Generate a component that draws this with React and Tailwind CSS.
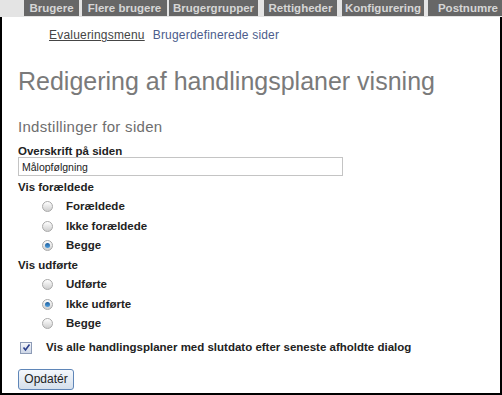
import React from 'react';

const tabs = [
  { label: 'Brugere', cls: 'ml-[24px] w-[55px]' },
  { label: 'Flere brugere', cls: 'ml-[3px] w-[85px]' },
  { label: 'Brugergrupper', cls: 'ml-[2px] w-[89px]' },
  { label: 'Rettigheder', cls: 'ml-[6px] w-[73px]' },
  { label: 'Konfigurering', cls: 'ml-[5px] w-[82px]' },
  { label: 'Postnumre', cls: 'ml-[4px] w-[80px]' },
];

function Radio({ checked }) {
  return (
    <span className="w-[11px] h-[11px] rounded-full border border-[#a9a9a9] bg-gradient-to-b from-[#ffffff] to-[#cfcfcf] flex items-center justify-center">
      {checked && (
        <span className="w-[5px] h-[5px] rounded-full bg-gradient-to-b from-[#1f5e9c] to-[#4fa0e0]" />
      )}
    </span>
  );
}

function RadioRow({ label, checked }) {
  return (
    <div className="h-[19.5px] flex items-center pl-[24px]">
      <Radio checked={checked} />
      <span className="ml-[13px] text-[11.5px] font-bold text-[#222]">{label}</span>
    </div>
  );
}

export default function App() {
  return (
    <div className="w-[502px] h-[395px] flex flex-col bg-white font-['Liberation_Sans',Arial,sans-serif] overflow-hidden">
      {/* top menu */}
      <div className="h-[17px] shrink-0 bg-[#e4e4e4] flex">
        {tabs.map((t) => (
          <div
            key={t.label}
            className={`${t.cls} h-[16px] shrink-0 bg-[#676767] text-[#d6d6d6] text-[11.5px] font-bold leading-[16px] text-center whitespace-nowrap`}
          >
            {t.label}
          </div>
        ))}
      </div>

      <div className="flex-1 border-x-2 border-b-2 border-black pl-[16px] flex flex-col">
        {/* sub menu */}
        <div className="mt-[11px] h-[14px] leading-[14px] text-[12px] tracking-[0.2px] pl-[31px] flex gap-[8px]">
          <span className="text-[#454545] underline">Evalueringsmenu</span>
          <span className="text-[#4b5c8c]">Brugerdefinerede sider</span>
        </div>

        <h1 className="mt-[24px] h-[30px] leading-[30px] text-[25px] text-[#7a7a7a] whitespace-nowrap">
          Redigering af handlingsplaner visning
        </h1>

        <h2 className="mt-[22px] h-[18px] leading-[18px] text-[15px] tracking-[0.3px] text-[#6e6e6e]">
          Indstillinger for siden
        </h2>

        <div className="mt-[8px] h-[14px] leading-[14px] text-[11.5px] font-bold text-[#222]">
          Overskrift på siden
        </div>
        <input
          defaultValue="Målopfølgning"
          className="mt-[-1px] w-[325px] h-[19px] border border-[#c4c4c4] px-[3px] text-[10.5px] text-[#222] outline-none"
        />

        <div className="mt-[1.5px] h-[19.5px] leading-[19.5px] text-[11.5px] font-bold text-[#222]">
          Vis forældede
        </div>
        <RadioRow label="Forældede" />
        <RadioRow label="Ikke forældede" />
        <RadioRow label="Begge" checked />

        <div className="h-[19.5px] leading-[19.5px] text-[11.5px] font-bold text-[#222]">
          Vis udførte
        </div>
        <RadioRow label="Udførte" />
        <RadioRow label="Ikke udførte" checked />
        <RadioRow label="Begge" />

        <div className="mt-[4px] h-[20px] flex items-center pl-[2px]">
          <span className="w-[12px] h-[12px] border border-[#8d9bb6] bg-gradient-to-b from-[#f4f6fa] to-[#cdd6e6] flex items-center justify-center">
            <svg width="9" height="9" viewBox="0 0 9 9">
              <path d="M1.5 4.5 L3.5 7 L7.5 1.5" fill="none" stroke="#2b3f8c" strokeWidth="1.6" />
            </svg>
          </span>
          <span className="ml-[14px] text-[11.5px] font-bold text-[#222] whitespace-nowrap">
            Vis alle handlingsplaner med slutdato efter seneste afholdte dialog
          </span>
        </div>

        <div className="mt-[8px]">
          <button className="w-[56px] h-[21px] rounded-[3px] border border-[#5f86b8] bg-gradient-to-b from-[#f5f8fc] to-[#d5dfeb] text-[12px] text-[#222] leading-[19px]">
            Opdatér
          </button>
        </div>
      </div>
    </div>
  );
}
